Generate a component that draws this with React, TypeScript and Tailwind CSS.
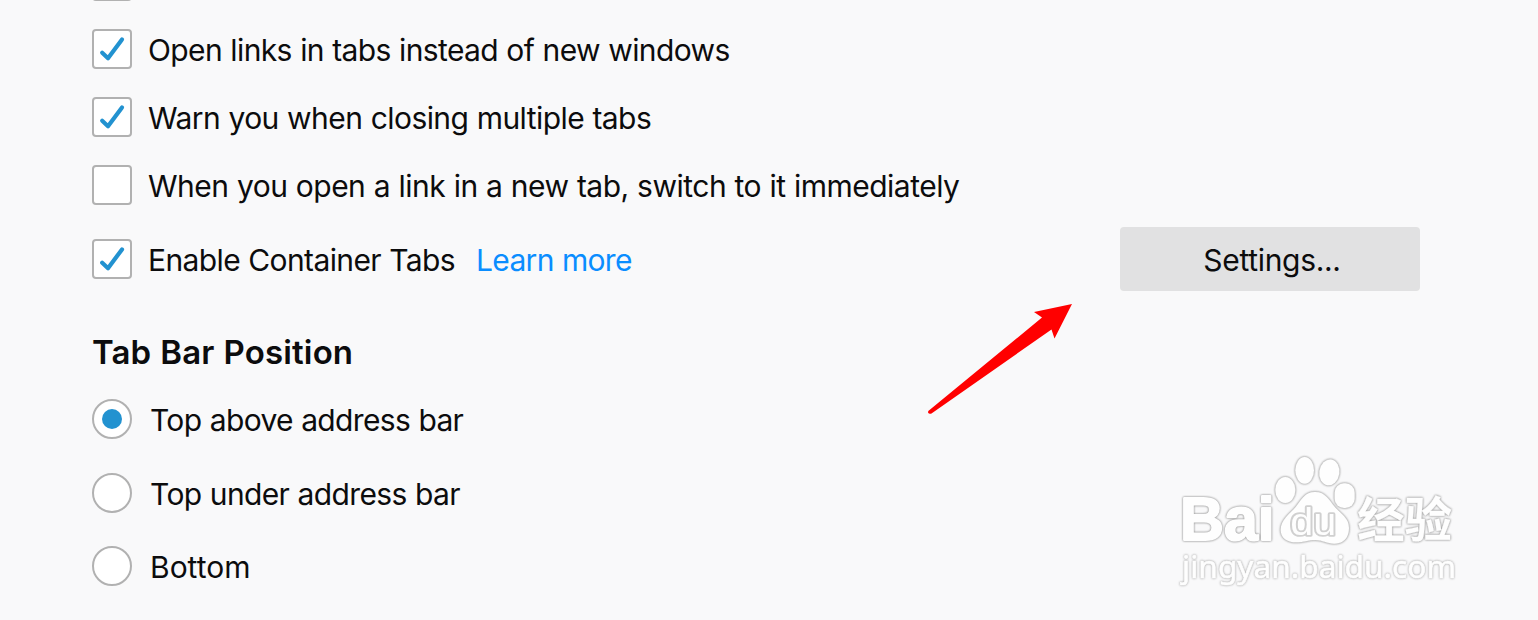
import React from 'react';

function Checkbox({ checked = false }: { checked?: boolean }) {
  return (
    <span className="flex w-10 h-10 shrink-0 border-2 border-[#b1b1b1] rounded-[4px] bg-white">
      {checked && (
        <svg viewBox="0 0 36 36" className="w-9 h-9" fill="none">
          <path
            d="M8.2 21.8 L14 27.2 L28 8.4"
            stroke="#2292d0"
            strokeWidth="4.2"
            strokeLinecap="round"
            strokeLinejoin="round"
          />
        </svg>
      )}
    </span>
  );
}

function Radio({ selected = false }: { selected?: boolean }) {
  return (
    <span className="flex items-center justify-center w-10 h-10 shrink-0 border-2 border-[#b1b1b1] rounded-full bg-white">
      {selected && <span className="w-5 h-5 rounded-full bg-[#2292d0]" />}
    </span>
  );
}

function Arrow() {
  return (
    <svg
      viewBox="0 0 180 135"
      className="absolute left-[910px] top-[290px] w-[180px] h-[135px]"
      fill="#ff0000"
    >
      <path d="M18.3 121 L132 27.5 L124 22 L162 14 L144.5 48.5 L141.5 39.5 L21.5 123.5 Q19 124.5 18 122.5 Z" />
    </svg>
  );
}

function Watermark() {
  return (
    <svg
      viewBox="0 0 960 480"
      className="absolute left-[1160px] top-[440px] w-[320px] h-[160px]"
      fill="#fefefe"
      stroke="#fefefe"
      strokeLinejoin="round"
    >
      <g className="[filter:drop-shadow(0_0_2.5px_#999)_drop-shadow(0_0_2px_#bbb)]">
        <text
          x="60"
          y="301"
          fontSize="182"
          strokeWidth="6"
          textLength="284"
          lengthAdjust="spacingAndGlyphs"
          className="font-['Liberation_Sans',sans-serif] font-bold"
        >
          Bai
        </text>
        <g strokeWidth="1">
          <ellipse cx="376" cy="150" rx="30" ry="39" />
          <ellipse cx="434" cy="91" rx="28" ry="40" />
          <ellipse cx="508" cy="97" rx="30" ry="39" transform="rotate(8 508 97)" />
          <rect x="524" y="130" width="60" height="74" rx="28" />
          <path d="M465 156 C434 156 425 179 407 201 C388 223 362 240 362 270 C362 294 382 307 408 307 C433 307 443 300 466 300 C489 300 499 311 524 311 C552 311 567 291 567 264 C567 234 542 221 525 202 C507 180 497 156 465 156 Z" />
        </g>
        <text
          x="592"
          y="291"
          fontSize="142"
          strokeWidth="1"
          textLength="284"
          lengthAdjust="spacingAndGlyphs"
          className="font-['Noto_Sans_CJK_SC',sans-serif] font-bold"
        >
          经验
        </text>
      </g>
      <text
        x="391"
        y="284"
        fontSize="114"
        stroke="#d0d0d0"
        strokeWidth="11"
        textLength="138"
        lengthAdjust="spacingAndGlyphs"
        className="font-['Liberation_Sans',sans-serif] [paint-order:stroke]"
      >
        du
      </text>
      <text
        x="66"
        y="414"
        fontSize="91"
        strokeWidth="2"
        textLength="822"
        lengthAdjust="spacingAndGlyphs"
        className="font-['Noto_Sans',sans-serif] [filter:drop-shadow(0_0_2.5px_#aaa)_drop-shadow(0_0_2px_#ddd)]"
      >
        jingyan.baidu.com
      </text>
    </svg>
  );
}

export default function App() {
  return (
    <div className="relative w-[1538px] h-[620px] overflow-hidden bg-[#f9f9fa] text-[#0c0c0d] font-['Inter',sans-serif] text-[30px] leading-10 [word-spacing:0.5px]">
      <div className="-mt-[39px] pl-[92px] pr-[118px]">
        <div className="flex flex-col">
          <Checkbox />
          <label className="flex items-center gap-4 mt-[27px]">
            <Checkbox checked />
            <span className="pt-0.5 tracking-[-0.62px]">Open links in tabs instead of new windows</span>
          </label>
          <label className="flex items-center gap-4 mt-[26px]">
            <Checkbox checked />
            <span className="pt-0.5 tracking-[-0.57px]">Warn you when closing multiple tabs</span>
          </label>
          <label className="flex items-center gap-4 mt-[26px]">
            <Checkbox />
            <span className="pt-0.5 tracking-[-0.51px]">When you open a link in a new tab, switch to it immediately</span>
          </label>
        </div>

        <div className="flex items-center justify-between h-16 mt-[21px]">
          <div className="flex items-center">
            <label className="flex items-center gap-4">
              <Checkbox checked />
              <span className="pt-0.5 tracking-[-0.62px]">Enable Container Tabs</span>
            </label>
            <a href="#" className="ml-[21px] pt-0.5 tracking-[-0.68px] text-[#0a8dff]">Learn more</a>
          </div>
          <button className="w-[300px] h-16 pt-0.5 pl-1 rounded-[4px] bg-[#e1e1e2] tracking-[-0.32px]">
            Settings...
          </button>
        </div>

        <h2 className="mt-[41px] text-[33px] font-semibold tracking-[0.15px]">Tab Bar Position</h2>

        <div className="flex flex-col mt-[26px]">
          <label className="flex items-center gap-[18px]">
            <Radio selected />
            <span className="pt-0.5 tracking-[-0.65px]">Top above address bar</span>
          </label>
          <label className="flex items-center gap-[18px] mt-8">
            <Radio />
            <span className="pt-0.5 tracking-[-0.63px]">Top under address bar</span>
          </label>
          <label className="flex items-center gap-[18px] mt-[31px]">
            <Radio />
            <span className="pt-0.5">Bottom</span>
          </label>
        </div>
      </div>

      <Arrow />
      <Watermark />
    </div>
  );
}
